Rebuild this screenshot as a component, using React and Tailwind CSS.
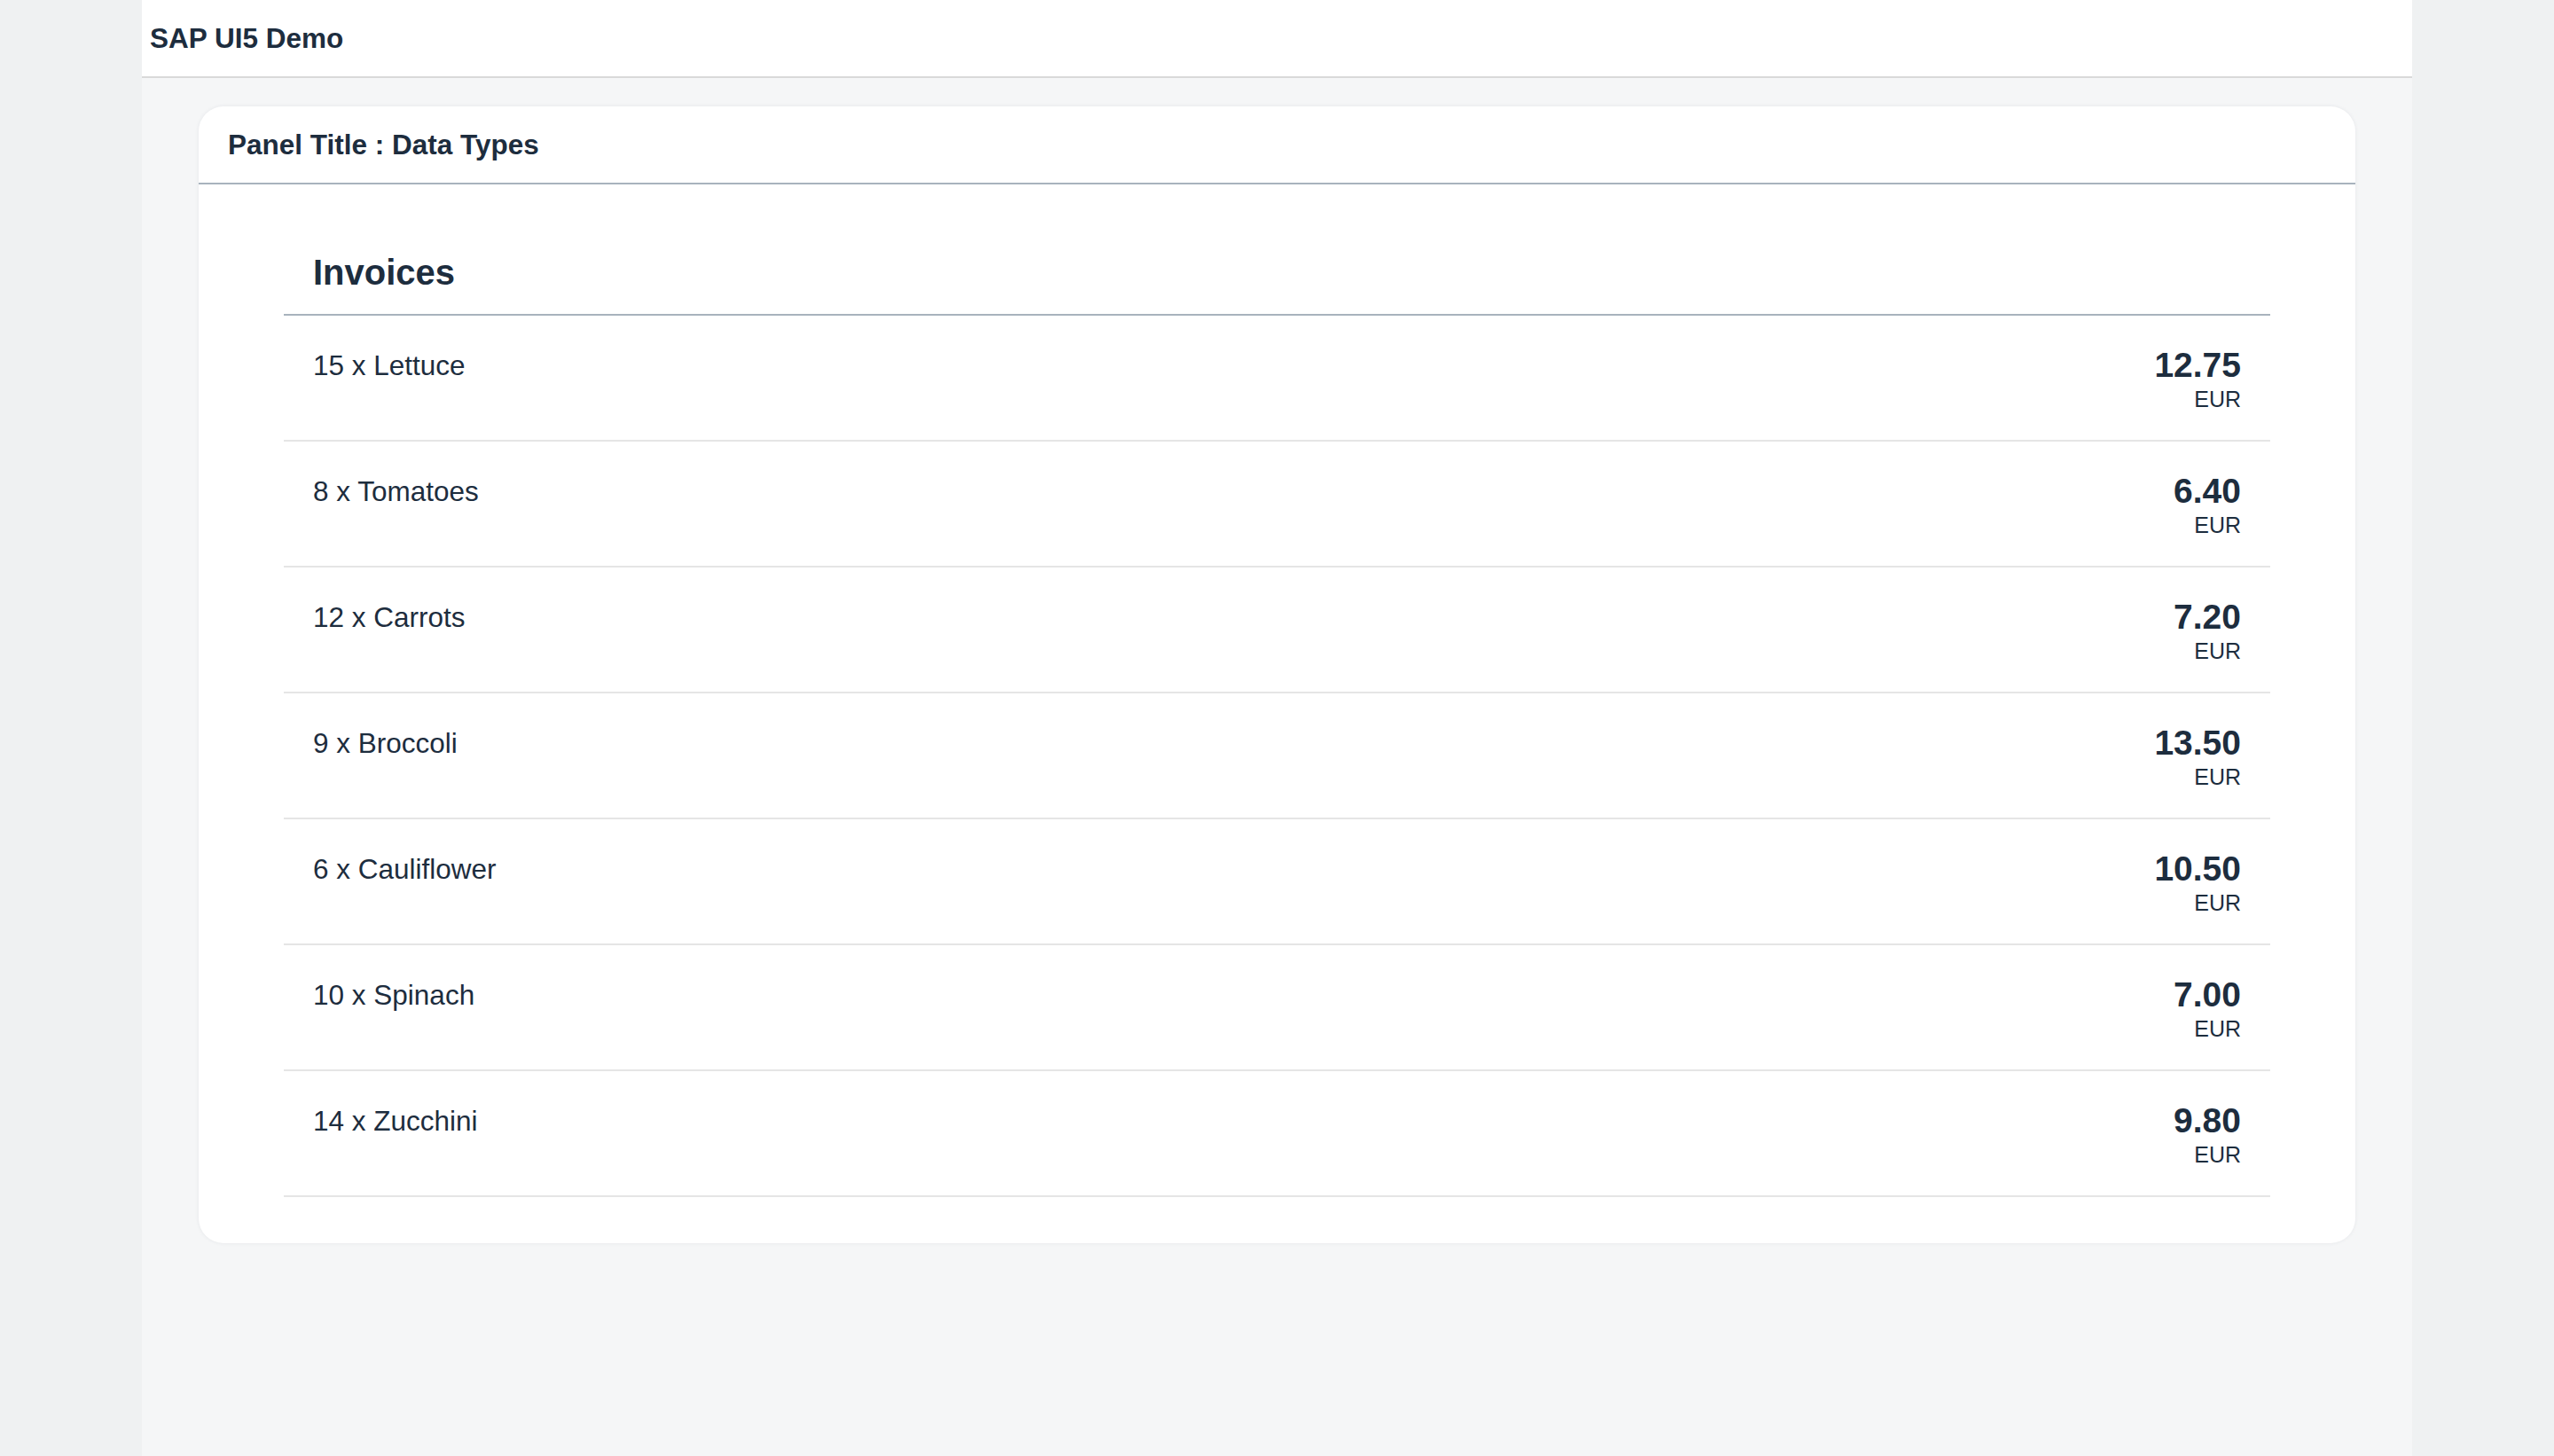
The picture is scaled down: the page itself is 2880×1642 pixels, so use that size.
const invoices = [
  { qty: 15, name: "Lettuce", price: "12.75" },
  { qty: 8, name: "Tomatoes", price: "6.40" },
  { qty: 12, name: "Carrots", price: "7.20" },
  { qty: 9, name: "Broccoli", price: "13.50" },
  { qty: 6, name: "Cauliflower", price: "10.50" },
  { qty: 10, name: "Spinach", price: "7.00" },
  { qty: 14, name: "Zucchini", price: "9.80" },
];

export default function App() {
  return (
    <div
      className="min-h-screen bg-[#eff1f2] text-[#1d2d3e]"
      style={{ fontFamily: '"Liberation Sans", Arial, sans-serif' }}
    >
      <div className="mx-auto w-[2560px] min-h-screen bg-[#f5f6f7]">
        {/* Shell bar */}
        <div className="h-[88px] bg-white border-b-2 border-[#d9d9d9] flex items-center pl-[9px] pt-[2px]">
          <span className="text-[31.5px] font-bold leading-none">SAP UI5 Demo</span>
        </div>

        {/* Panel */}
        <div className="pt-[32px] px-[64px]">
          <div className="bg-white rounded-[28px] shadow-[0_0_4px_rgba(34,53,72,0.08)]">
            <div className="h-[88px] border-b-2 border-[#a8b3bd] flex items-center pl-[33px] pt-[2px]">
              <span className="text-[31.5px] font-bold leading-none">
                Panel Title : Data Types
              </span>
            </div>

            <div className="px-[96px] pt-[52px] pb-[52px]">
              {/* List header */}
              <div className="h-[96px] border-b-2 border-[#a8b3bd] flex items-center px-[33px]">
                <span className="text-[40px] font-bold leading-none">Invoices</span>
              </div>

              {/* Items */}
              {invoices.map((item) => (
                <div
                  key={item.name}
                  className="h-[142px] border-b-2 border-[#e5e5e5] flex items-start justify-between px-[33px] pt-[36px]"
                >
                  <span className="mt-[5px] text-[31.5px] leading-none">
                    {item.qty} x {item.name}
                  </span>
                  <div className="flex flex-col items-end">
                    <span className="text-[39px] font-bold leading-none">{item.price}</span>
                    <span className="mt-[7px] text-[25px] leading-none">EUR</span>
                  </div>
                </div>
              ))}
            </div>
          </div>
        </div>
      </div>
    </div>
  );
}
